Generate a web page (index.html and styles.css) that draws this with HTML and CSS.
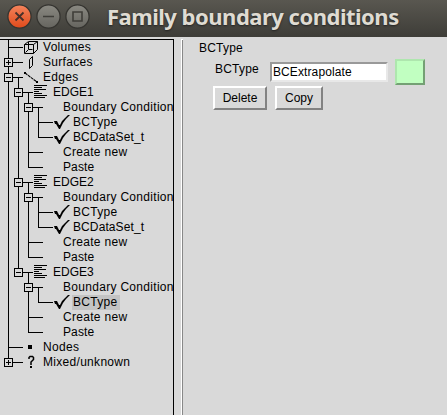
FILE: index.html
```html
<!DOCTYPE html>
<html lang="en">
<head>
<meta charset="utf-8">
<title>Family boundary conditions</title>
<link rel="stylesheet" href="styles.css">
</head>
<body>
<svg class="defs" width="0" height="0" aria-hidden="true">
  <symbol id="check" viewBox="0 0 16 15"><path d="M0 6h3l2 4h1l2-4 3-3 3-3h2l-4 4-3 4-2 4-1 2H5L2 9H1z" fill="#000"/></symbol>
  <symbol id="lines" viewBox="0 0 14 15"><path d="M0 .5h13M0 2.500h8M0 4.500h12M0 6.500h5M0 8.500h8M0 10.500h13M0 12.500h11" stroke="#000" fill="none"/></symbol>
</svg>
<header class="titlebar">
  <svg class="controls" width="92" height="37" viewBox="0 0 92 37">
    <defs>
      <linearGradient id="red" x1="0" y1="0" x2="0" y2="1"><stop offset="0" stop-color="#f4845c"/><stop offset="1" stop-color="#e04a1b"/></linearGradient>
      <linearGradient id="gray" x1="0" y1="0" x2="0" y2="1"><stop offset="0" stop-color="#8a8982"/><stop offset="1" stop-color="#66655f"/></linearGradient>
    </defs>
    <g stroke="#353430" stroke-width="1.3">
      <circle cx="19.5" cy="16.5" r="11.6" fill="url(#red)"/>
      <circle cx="48.5" cy="16.5" r="11.6" fill="url(#gray)"/>
      <circle cx="77.5" cy="16.5" r="11.6" fill="url(#gray)"/>
    </g>
    <path d="M15.5 12.5l8 8M23.5 12.5l-8 8" stroke="#47302a" stroke-width="1.8"/>
    <path d="M43 16.5h11M73 12h9v9h-9z" stroke="#3f3e39" stroke-width="1.6" fill="none"/>
  </svg>
  <h1 class="title">Family boundary conditions</h1>
</header>
<main class="panes">
  <nav class="tree">
    <svg class="branches" width="60" height="330" viewBox="0 39 60 330" fill="none" stroke="#000" shape-rendering="crispEdges">
      <path d="M8.5 39V362M18.5 77V272M28.5 92V167M28.5 182V257M28.5 272V332M38.5 107V137M38.5 197V227M38.5 287V302"/>
      <path d="M8 47.5h15M8 62.5h15M8 77.5h15M8 347.5h15M8 362.5h15M18 92.5h15M18 182.5h15M18 272.5h15M28 107.5h15M28 152.5h15M28 167.5h15M28 197.5h15M28 242.5h15M28 257.5h15M28 287.5h15M28 317.5h15M28 332.5h15M38 122.5h15M38 137.5h15M38 212.5h15M38 227.5h15M38 302.5h15"/>
      <path fill="#d9d9d9" d="M4.5 58.5h8v8h-8zM4.5 73.5h8v8h-8zM4.5 358.5h8v8h-8zM14.5 88.5h8v8h-8zM14.5 178.5h8v8h-8zM14.5 268.5h8v8h-8zM24.5 103.5h8v8h-8zM24.5 193.5h8v8h-8zM24.5 283.5h8v8h-8z"/>
      <path d="M6 62.5h5M8.5 60v5M6 77.5h5M6 362.5h5M8.5 360v5M16 92.5h5M16 182.5h5M16 272.5h5M26 107.5h5M26 197.5h5M26 287.5h5"/>
    </svg>
    <ul class="rows">
      <li class="row l1"><svg class="icon" width="14" height="15" viewBox="0 0 14 15"><path d="M.5 4.500h9v9h-9zM.5 4.500l4-3h9l-4 3M13.500 1.500v8l-4 4M4.500 2v7M4.500 9.500h4M4.500 9.500l-3 3" fill="none" stroke="#000"/></svg><span>Volumes</span></li>
      <li class="row l1"><svg class="icon" width="14" height="15" viewBox="0 0 14 15"><path d="M5.500 4.500l3-3v9l-3 3z" fill="none" stroke="#000"/></svg><span>Surfaces</span></li>
      <li class="row l1"><svg class="icon" width="14" height="15" viewBox="0 0 14 15"><path d="M1 3l12 9" stroke="#000" stroke-width="1.1" stroke-dasharray="3 .6"/><path d="M0 2h2v2H0zM12 11h2v2h-2z"/></svg><span>Edges</span></li>
      <li class="row l2"><svg class="icon" width="14" height="15"><use href="#lines"/></svg><span class="tight">EDGE1</span></li>
      <li class="row l3"><span>Boundary Condition</span></li>
      <li class="row l4"><svg class="icon" width="16" height="15"><use href="#check"/></svg><span>BCType</span></li>
      <li class="row l4"><svg class="icon" width="16" height="15"><use href="#check"/></svg><span class="snug">BCDataSet_t</span></li>
      <li class="row l3"><span>Create new</span></li>
      <li class="row l3"><span class="snug">Paste</span></li>
      <li class="row l2"><svg class="icon" width="14" height="15"><use href="#lines"/></svg><span class="tight">EDGE2</span></li>
      <li class="row l3"><span>Boundary Condition</span></li>
      <li class="row l4"><svg class="icon" width="16" height="15"><use href="#check"/></svg><span>BCType</span></li>
      <li class="row l4"><svg class="icon" width="16" height="15"><use href="#check"/></svg><span class="snug">BCDataSet_t</span></li>
      <li class="row l3"><span>Create new</span></li>
      <li class="row l3"><span class="snug">Paste</span></li>
      <li class="row l2"><svg class="icon" width="14" height="15"><use href="#lines"/></svg><span class="tight">EDGE3</span></li>
      <li class="row l3"><span>Boundary Condition</span></li>
      <li class="row l4"><svg class="icon" width="16" height="15"><use href="#check"/></svg><span class="selected">BCType</span></li>
      <li class="row l3"><span>Create new</span></li>
      <li class="row l3"><span class="snug">Paste</span></li>
      <li class="row l1"><svg class="icon" width="14" height="15" viewBox="0 0 14 15"><path d="M4 5h4v4H4z"/></svg><span>Nodes</span></li>
      <li class="row l1"><svg class="icon" width="14" height="15" viewBox="0 0 14 15"><path d="M5 4V2.500l1-1h2.500l1 1v2L7 7v3" fill="none" stroke="#000" stroke-width="1.5"/><path d="M6 11h2v2H6z"/></svg><span>Mixed/unknown</span></li>
    </ul>
  </nav>
  <div class="sash"></div>
  <section class="detail">
    <h2 class="heading">BCType</h2>
    <div class="field">
      <label class="label" for="value">BCType</label>
      <input class="entry" id="value" value="BCExtrapolate">
      <span class="swatch"></span>
    </div>
    <div class="actions">
      <button class="button delete">Delete</button>
      <button class="button copy">Copy</button>
    </div>
  </section>
</main>
</body>
</html>
```
FILE: styles.css
```css
* { box-sizing: border-box; }
body {
  margin: 0;
  width: 447px;
  height: 415px;
  overflow: hidden;
  background: #d9d9d9;
  color: #000;
  font: 12px/15px "Liberation Sans", Arial, sans-serif;
  display: flex;
  flex-direction: column;
}
.defs { position: absolute; }
.titlebar {
  height: 37px;
  flex: none;
  display: flex;
  background: linear-gradient(#595750, #3e3d38);
}
.controls { flex: none; }
.title {
  margin: 0 0 0 15px;
  font: bold 22px/32px "Noto Sans", sans-serif;
  letter-spacing: -0.5px;
  color: #dfdbd2;
  text-shadow: 0 1px 2px #222;
  white-space: nowrap;
}
.panes { flex: 1; display: flex; }
.tree {
  position: relative;
  width: 174px;
  margin-top: 2px;
  border: solid #000;
  border-width: 1px 1px 0 0;
  overflow: hidden;
}
.branches { position: absolute; left: 0; top: -1px; }
.rows {
  position: relative;
  list-style: none;
  margin: 0;
  padding: 0;
  letter-spacing: 0.3px;
}
.row {
  height: 15px;
  display: flex;
  align-items: center;
  white-space: nowrap;
}
.icon { flex: none; }
.tight { letter-spacing: 0; }
.snug { letter-spacing: 0.1px; }
.l1 { padding-left: 24px; gap: 5px; }
.l2 { padding-left: 34px; gap: 5px; }
.l3 { padding-left: 63px; }
.l4 { padding-left: 54px; gap: 3px; }
.selected {
  margin-left: -1px;
  padding: 0 2px 0 1px;
  background: #c3c3c3;
}
.sash {
  width: 2px;
  margin: 2px 0 0 7px;
  border-top: 1px solid #fff;
  background: linear-gradient(90deg, #fff 50%, #888 50%);
}
.detail { padding: 4px 0 0 16px; }
.heading { margin: 0; font: inherit; letter-spacing: 0.2px; }
.field { display: flex; margin-top: 3px; padding-left: 16px; align-items: flex-start; }
.label { width: 55px; padding-top: 3px; letter-spacing: 0.2px; }
.entry {
  width: 118px;
  height: 20px;
  margin-top: 3px;
  padding: 0 1px;
  border: 2px solid;
  border-color: #999 #e8e8e8 #e8e8e8 #999;
  background: #fff;
  font: inherit;
  letter-spacing: 0.1px;
  color: #000;
}
.swatch {
  width: 30px;
  height: 26px;
  margin-left: 7px;
  background: #c1ffc1;
  border: 2px solid;
  border-color: #aee6ae #74a074 #74a074 #aee6ae;
}
.actions { display: flex; gap: 8px; margin-top: 1px; padding-left: 14px; }
.button {
  height: 24px;
  padding: 0;
  border: 2px solid;
  border-color: #fff #828282 #828282 #fff;
  background: #d9d9d9;
  color: #000;
  font: inherit;
}
.delete { width: 54px; }
.copy { width: 48px; }
```
